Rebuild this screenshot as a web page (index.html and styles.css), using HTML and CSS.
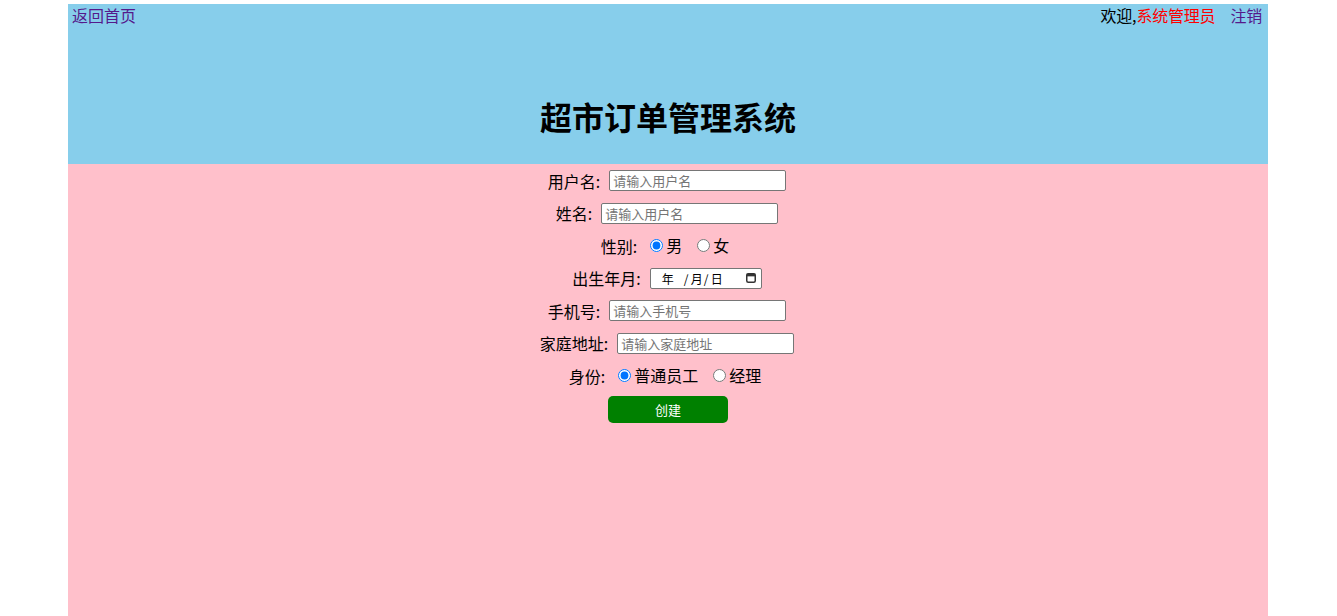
FILE: index.html
```html
<!DOCTYPE html>
<html lang="zh-CN">
<head>
<meta charset="utf-8">
<title>超市订单管理系统</title>
<link rel="stylesheet" href="styles.css">
</head>
<body>
<div class="page">
  <header class="header">
    <div class="topbar">
      <a class="link" href="#">返回首页</a>
      <div class="user">欢迎,<span class="uname">系统管理员</span><a class="link logout" href="#">注销</a></div>
    </div>
    <h1 class="title">超市订单管理系统</h1>
  </header>
  <main class="main">
    <form class="form">
      <div class="row"><label class="lbl">用户名:</label><input class="txt" type="text" placeholder="请输入用户名"></div>
      <div class="row"><label class="lbl">姓名:</label><input class="txt" type="text" placeholder="请输入用户名"></div>
      <div class="row row-radio"><label class="lbl lbl-r">性别:</label><input class="radio" type="radio" name="sex" checked><span>男</span><input class="radio radio-2" type="radio" name="sex"><span>女</span></div>
      <div class="row"><label class="lbl lbl-d">出生年月:</label>
        <div class="date" role="textbox" aria-label="出生年月">
          <span class="seg seg-y">年</span><span class="sep sep-1">/</span><span class="seg">月</span><span class="sep">/</span><span class="seg">日</span>
          <svg class="cal" width="10" height="10" viewBox="0 0 10 10" aria-hidden="true">
            <rect x="0.75" y="0.75" width="8.5" height="8.5" rx="1.5" fill="none" stroke="#333" stroke-width="1.5"/>
            <rect x="0.75" y="0.75" width="8.5" height="2.6" fill="#333"/>
          </svg>
        </div>
      </div>
      <div class="row"><label class="lbl">手机号:</label><input class="txt" type="text" placeholder="请输入手机号"></div>
      <div class="row"><label class="lbl">家庭地址:</label><input class="txt" type="text" placeholder="请输入家庭地址"></div>
      <div class="row row-radio"><label class="lbl lbl-r">身份:</label><input class="radio" type="radio" name="role" checked><span>普通员工</span><input class="radio radio-2" type="radio" name="role"><span>经理</span></div>
      <div class="row row-btn"><button class="btn" type="button">创建</button></div>
    </form>
  </main>
</div>
</body>
</html>
```
FILE: styles.css
```css
html, body {
  margin: 0;
  padding: 0;
  background: #fff;
}
body {
  font-family: "Noto Sans CJK SC", "Liberation Sans", sans-serif;
  font-size: 16px;
  color: #000;
}
.page {
  width: 1200px;
  margin: 4px 0 0 68px;
  min-height: calc(100vh - 4px);
  display: flex;
  flex-direction: column;
}
.header {
  background: #87ceeb;
  height: 160px;
  display: flex;
  flex-direction: column;
}
.topbar {
  display: flex;
  justify-content: space-between;
  height: 22px;
  line-height: 22px;
  padding: 0 6px 0 4px;
}
.user {
  letter-spacing: -0.2px;
}
.link {
  color: #551a8b;
  text-decoration: none;
}
.uname {
  color: #ff0000;
}
.logout {
  margin-left: 15px;
}
.title {
  margin: 70px 0 0;
  font-size: 32px;
  line-height: 40px;
  text-align: center;
  font-weight: bold;
}
.main {
  flex: 1;
  background: #ffc0cb;
}
.form {
  display: flex;
  flex-direction: column;
  margin: 0;
  padding-top: 0.5px;
}
.row {
  height: 32.5px;
  display: flex;
  align-items: center;
  justify-content: center;
  line-height: 20px;
  padding-right: 2px;
}
.row-radio {
  padding-right: 6px;
}
.row-radio span {
  margin-top: -1px;
}
.row-btn {
  margin-top: 1px;
  padding-right: 0;
}
.lbl {
  margin-right: 9px;
}
.lbl-r {
  margin-right: 13px;
}
.lbl-d {
  margin-right: 9px;
}
.txt {
  box-sizing: border-box;
  width: 177px;
  height: 21px;
  margin: 0;
  padding: 1px 3px;
  border: 1px solid #767676;
  border-radius: 2px;
  font-family: "Noto Sans CJK SC", "Liberation Sans", sans-serif;
  font-size: 13px;
  background: #fff;
}
.txt::placeholder {
  color: #757575;
}
.date {
  box-sizing: border-box;
  width: 112px;
  height: 21px;
  margin: 0;
  padding: 0 5px 0 11px;
  border: 1px solid #767676;
  border-radius: 2px;
  font-size: 12px;
  line-height: 19px;
  background: #fff;
  display: flex;
  align-items: center;
}
.seg {
  width: 11px;
}
.seg-y {
  margin-right: 11px;
}
.sep {
  width: 4px;
  margin: 0 3px 0 2px;
}
.sep-1 {
  margin-left: 0;
}
.cal {
  margin-left: auto;
  margin-top: -1px;
}
.radio {
  width: 13px;
  height: 13px;
  margin: 0 3px 0 0;
}
.radio-2 {
  margin-left: 15px;
}
.btn {
  width: 120px;
  height: 27px;
  border: none;
  border-radius: 5px;
  background: #008000;
  color: #fff;
  font-family: "Noto Sans CJK SC", "Liberation Sans", sans-serif;
  font-size: 13px;
  padding: 0;
}
```
